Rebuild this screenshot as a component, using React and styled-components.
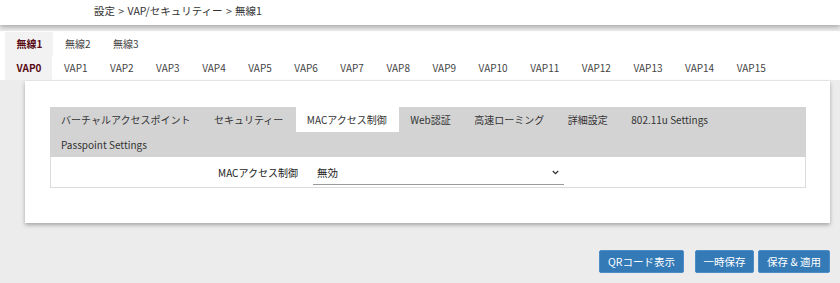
import React from "react";
import styled, { createGlobalStyle } from "styled-components";

const FONT = `"Noto Sans CJK JP", "Noto Sans", sans-serif`;

const Global = createGlobalStyle`
  html, body { margin: 0; padding: 0; }
  body {
    background: #ececec;
    font-family: ${FONT};
    font-size: 11px;
    color: #333;
  }
`;

const Header = styled.header`
  position: relative;
  z-index: 2;
  height: 25px;
  background: #fff;
  box-shadow: 0 2px 5px rgba(0, 0, 0, 0.3);
  padding-left: 94px;
  line-height: 22px;
  font-size: 10.5px;
  color: #333;
  word-spacing: 1px;
`;

const Nav = styled.nav`
  margin-top: 6px;
  background: #fff;
  padding: 1px 0 0 5px;
`;

const NavRow = styled.div`
  display: flex;
`;

const NavTab = styled.div`
  height: 24px;
  line-height: 24px;
  padding: 0 11px 0 11.5px;
  font-size: 10px;
  color: ${(p) => (p.$active ? "#5a0c16" : "#444")};
  font-weight: ${(p) => (p.$active ? 700 : 400)};
  background: ${(p) => (p.$active ? "#f2f2f2" : "transparent")};
`;

const Main = styled.main`
  padding: 1px 10px 0 25px;
`;

const Panel = styled.section`
  background: #fff;
  box-shadow: 0 2px 4px rgba(0, 0, 0, 0.3);
  padding: 26px 24px 35px 25px;
`;

const SubTabs = styled.div`
  display: flex;
  flex-wrap: wrap;
  background: #d3d3d3;
`;

const SubTab = styled.div`
  height: 25px;
  line-height: 25px;
  padding: 0 12.5px 0 11px;
  font-size: 10px;
  color: #333;
  background: ${(p) => (p.$active ? "#fff" : "transparent")};
`;

const Break = styled.div`
  flex-basis: 100%;
  height: 0;
`;

const FormRow = styled.div`
  display: grid;
  grid-template-columns: 247px 251px;
  column-gap: 15px;
  align-items: center;
  height: 30px;
  border: 1px solid #dcdcdc;
  border-top: none;
`;

const Label = styled.div`
  text-align: right;
  font-size: 10px;
  color: #222;
`;

const SelectBox = styled.div`
  display: flex;
  align-items: center;
  justify-content: space-between;
  height: 22px;
  margin-top: 2px;
  padding: 0 5px 0 4px;
  border-bottom: 1px solid #9a9a9a;
  font-size: 10.5px;
  color: #222;
`;

const Buttons = styled.div`
  display: flex;
  justify-content: flex-end;
  padding-top: 27px;
`;

const Button = styled.button`
  width: ${(p) => p.$w}px;
  height: 23px;
  margin-left: ${(p) => p.$gap}px;
  padding: 0;
  background: #337ab7;
  border: 1px solid #4d8cc4;
  border-radius: 2px;
  color: #fff;
  font-family: ${FONT};
  font-size: 10.5px;
  line-height: 21px;
  text-align: center;
`;

const Chevron = () => (
  <svg width="7" height="5" viewBox="0 0 7 5">
    <path d="M0.8 1l2.7 2.7L6.2 1" fill="none" stroke="#333" strokeWidth="1.3" />
  </svg>
);

const vaps = Array.from({ length: 16 }, (_, i) => `VAP${i}`);
const subTabs = [
  "バーチャルアクセスポイント",
  "セキュリティー",
  "MACアクセス制御",
  "Web認証",
  "高速ローミング",
  "詳細設定",
  "802.11u Settings",
];

export default function App() {
  return (
    <>
      <Global />
      <Header>設定 &gt; VAP/セキュリティー &gt; 無線1</Header>
      <Nav>
        <NavRow>
          {["無線1", "無線2", "無線3"].map((t, i) => (
            <NavTab key={t} $active={i === 0}>
              {t}
            </NavTab>
          ))}
        </NavRow>
        <NavRow>
          {vaps.map((t, i) => (
            <NavTab key={t} $active={i === 0}>
              {t}
            </NavTab>
          ))}
        </NavRow>
      </Nav>
      <Main>
        <Panel>
          <SubTabs>
            {subTabs.map((t) => (
              <SubTab key={t} $active={t === "MACアクセス制御"}>
                {t}
              </SubTab>
            ))}
            <Break />
            <SubTab>Passpoint Settings</SubTab>
          </SubTabs>
          <FormRow>
            <Label>MACアクセス制御</Label>
            <SelectBox>
              <span>無効</span>
              <Chevron />
            </SelectBox>
          </FormRow>
        </Panel>
        <Buttons>
          <Button $w={85} $gap={0}>QRコード表示</Button>
          <Button $w={59} $gap={11}>一時保存</Button>
          <Button $w={72} $gap={4}>保存 &amp; 適用</Button>
        </Buttons>
      </Main>
    </>
  );
}
